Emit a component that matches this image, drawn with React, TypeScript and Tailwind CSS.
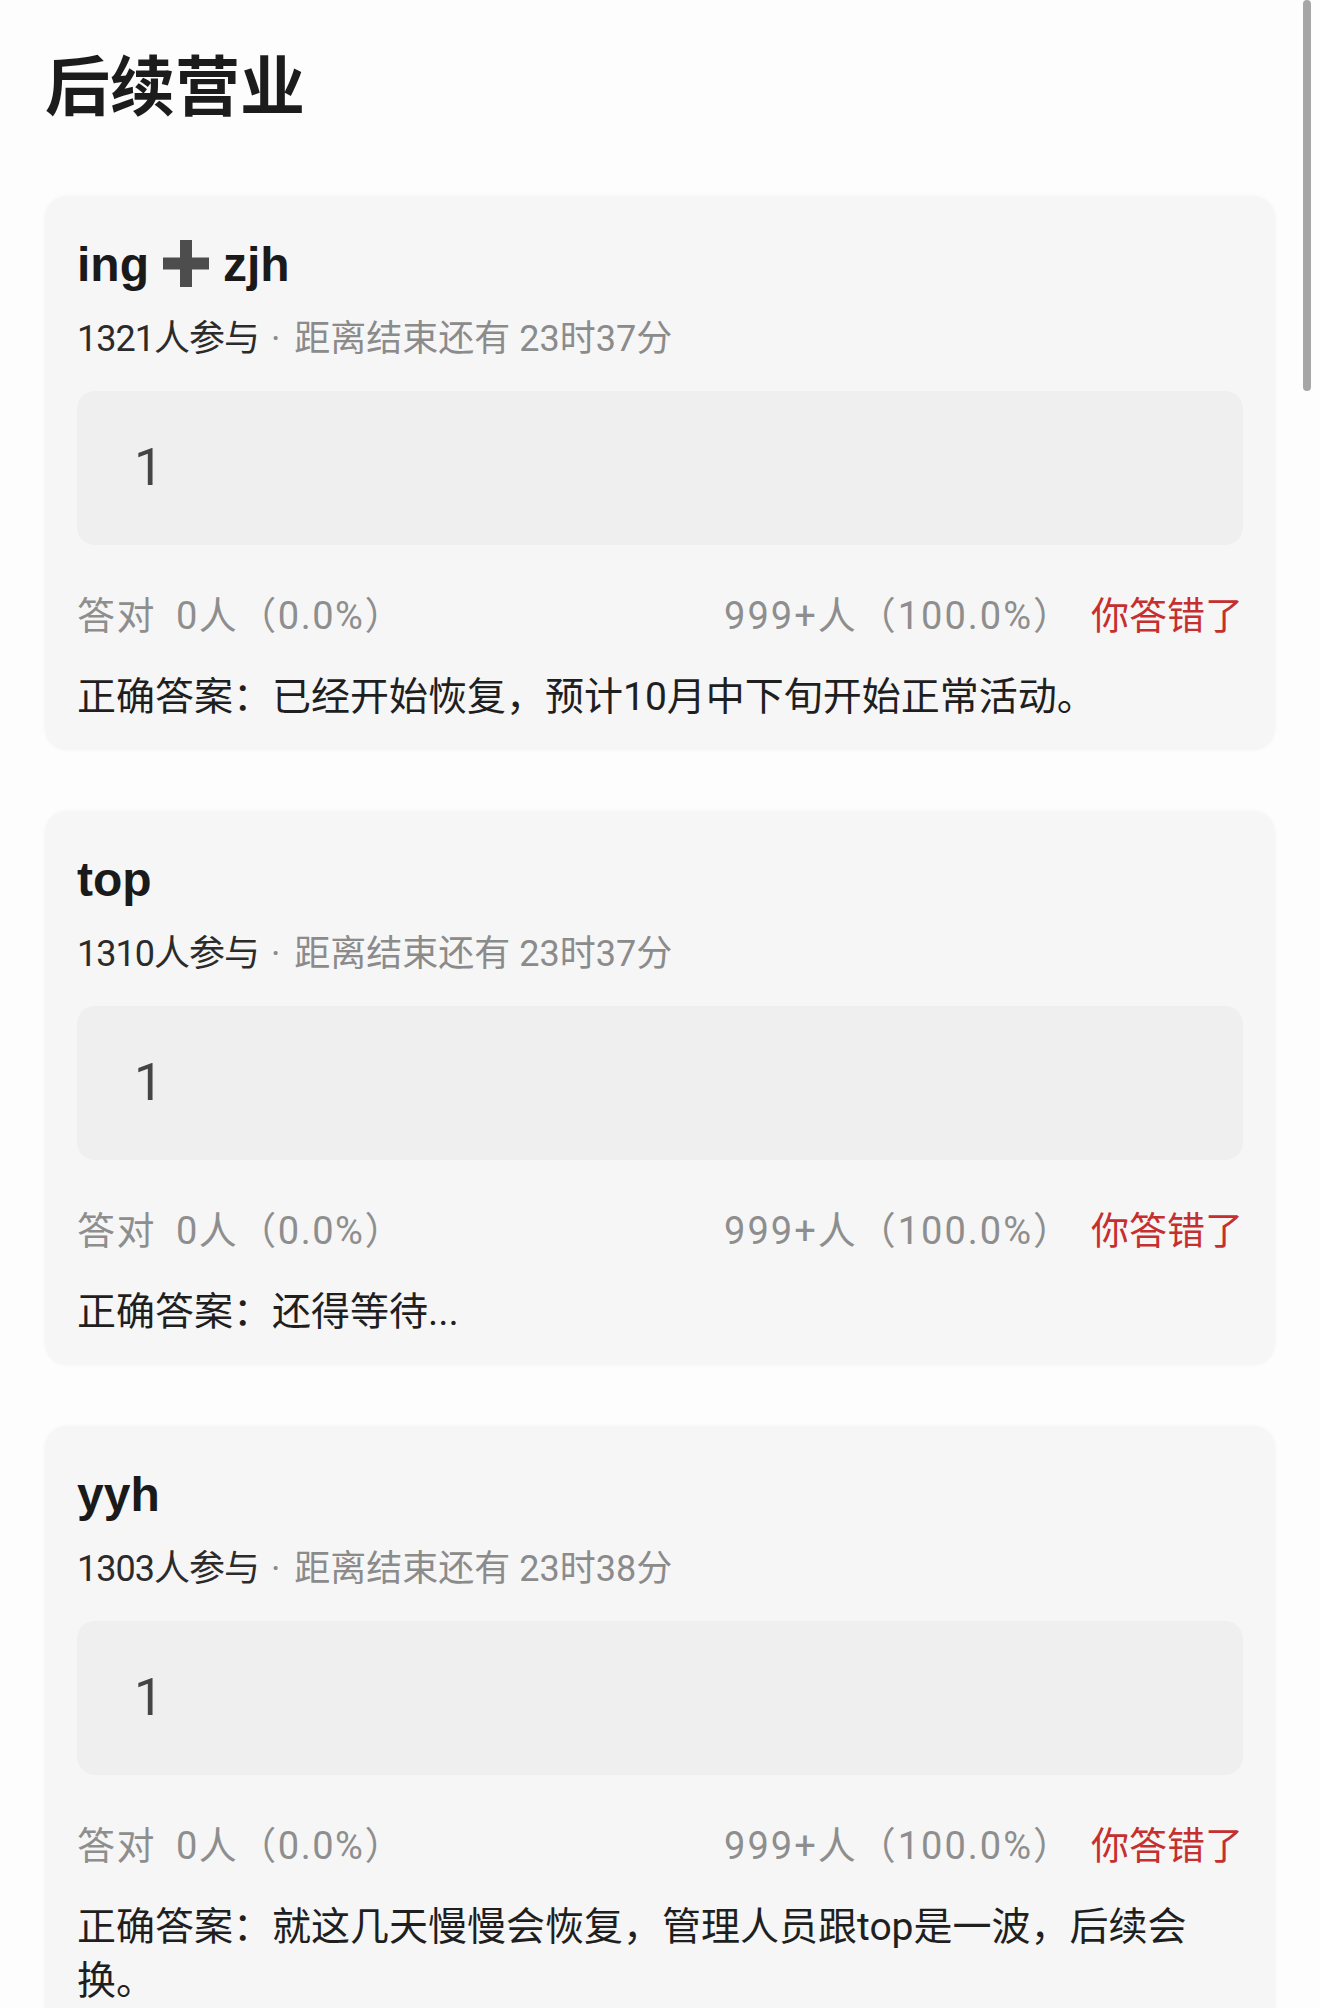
import React from "react";

type Question = {
  title: string;
  joined: string;
  remain: string;
  answer: string;
};

const QUESTIONS: Question[] = [
  { title: "ing+zjh", joined: "1321人参与", remain: "距离结束还有 23时37分", answer: "正确答案：已经开始恢复，预计10月中下旬开始正常活动。" },
  { title: "top", joined: "1310人参与", remain: "距离结束还有 23时37分", answer: "正确答案：还得等待..." },
  { title: "yyh", joined: "1303人参与", remain: "距离结束还有 23时38分", answer: "正确答案：就这几天慢慢会恢复，管理人员跟top是一波，后续会换。" },
];

// heavy plus sign used in the first title
const HeavyPlus = () => (
  <svg width="46" height="47" viewBox="0 0 46 47" className="mb-[4px] shrink-0">
    <rect x="17" y="0" width="12" height="47" fill="#4d4d4d" />
    <rect x="0" y="17.5" width="46" height="12" fill="#4d4d4d" />
  </svg>
);

const QuestionTitle = ({ title }: { title: string }) => {
  const parts = title.split("+");
  return (
    <div className="flex items-center gap-[14px] h-[60px] leading-[60px] text-[48px] font-bold text-[#1a1a1a] font-['Liberation_Sans','Noto_Sans_CJK_SC',sans-serif]">
      {parts.map((p, i) => (
        <React.Fragment key={i}>
          {i > 0 && <HeavyPlus />}
          <span>{p}</span>
        </React.Fragment>
      ))}
    </div>
  );
};

const QuestionCard = ({ q }: { q: Question }) => (
  <div className="rounded-[22px] bg-[#f6f6f6] px-8 pt-[39px] pb-[26px] shadow-[0_0_4px_rgba(0,0,0,0.04)]">
    <QuestionTitle title={q.title} />

    <div className="mt-[19px] h-[50px] leading-[50px] text-[36px] whitespace-nowrap">
      <span className="text-[#2b2b2b] tracking-[-1px]">{q.joined}</span>
      <span className="text-[#8b8b8b] ml-[12px] mr-[14px]">·</span>
      <span className="text-[#8b8b8b]">{q.remain}</span>
    </div>

    <div className="mt-[27px] h-[154px] rounded-[18px] bg-[#efefef] flex items-center pl-[57px]">
      <span className="text-[52px] text-[#454545] leading-none">1</span>
    </div>

    <div className="mt-[45px] h-[52px] leading-[52px] text-[38px] flex items-center justify-between whitespace-nowrap">
      <div className="text-[#8e8e8e] flex tracking-[1.5px]">
        <span>答对</span>
        <span className="ml-[20px]">0人（0.0%）</span>
      </div>
      <div className="flex items-center gap-[18px]">
        <span className="text-[#8e8e8e] tracking-[2px]">999+人（100.0%）</span>
        <span className="text-[#c62f2f]">你答错了</span>
      </div>
    </div>

    <p className="mt-[28px] max-w-[1125px] text-[39px] leading-[54px] text-[#1f1f1f]">{q.answer}</p>
  </div>
);

export default function App() {
  return (
    <div className="relative h-[2008px] overflow-hidden bg-[#fdfdfd] px-[45px] font-['Roboto','Noto_Sans_CJK_SC',sans-serif]">
      <h1 className="pt-[51px] h-[126px] leading-[75px] text-[65px] font-bold text-[#1c1c1c]">后续营业</h1>

      <div className="mt-[70px] flex flex-col gap-[61px]">
        {QUESTIONS.map((q) => (
          <QuestionCard key={q.title} q={q} />
        ))}
      </div>

      {/* scroll indicator */}
      <div className="absolute right-[9px] top-0 w-[8px] h-[391px] rounded-full bg-[#a6a6a6]" />
    </div>
  );
}
